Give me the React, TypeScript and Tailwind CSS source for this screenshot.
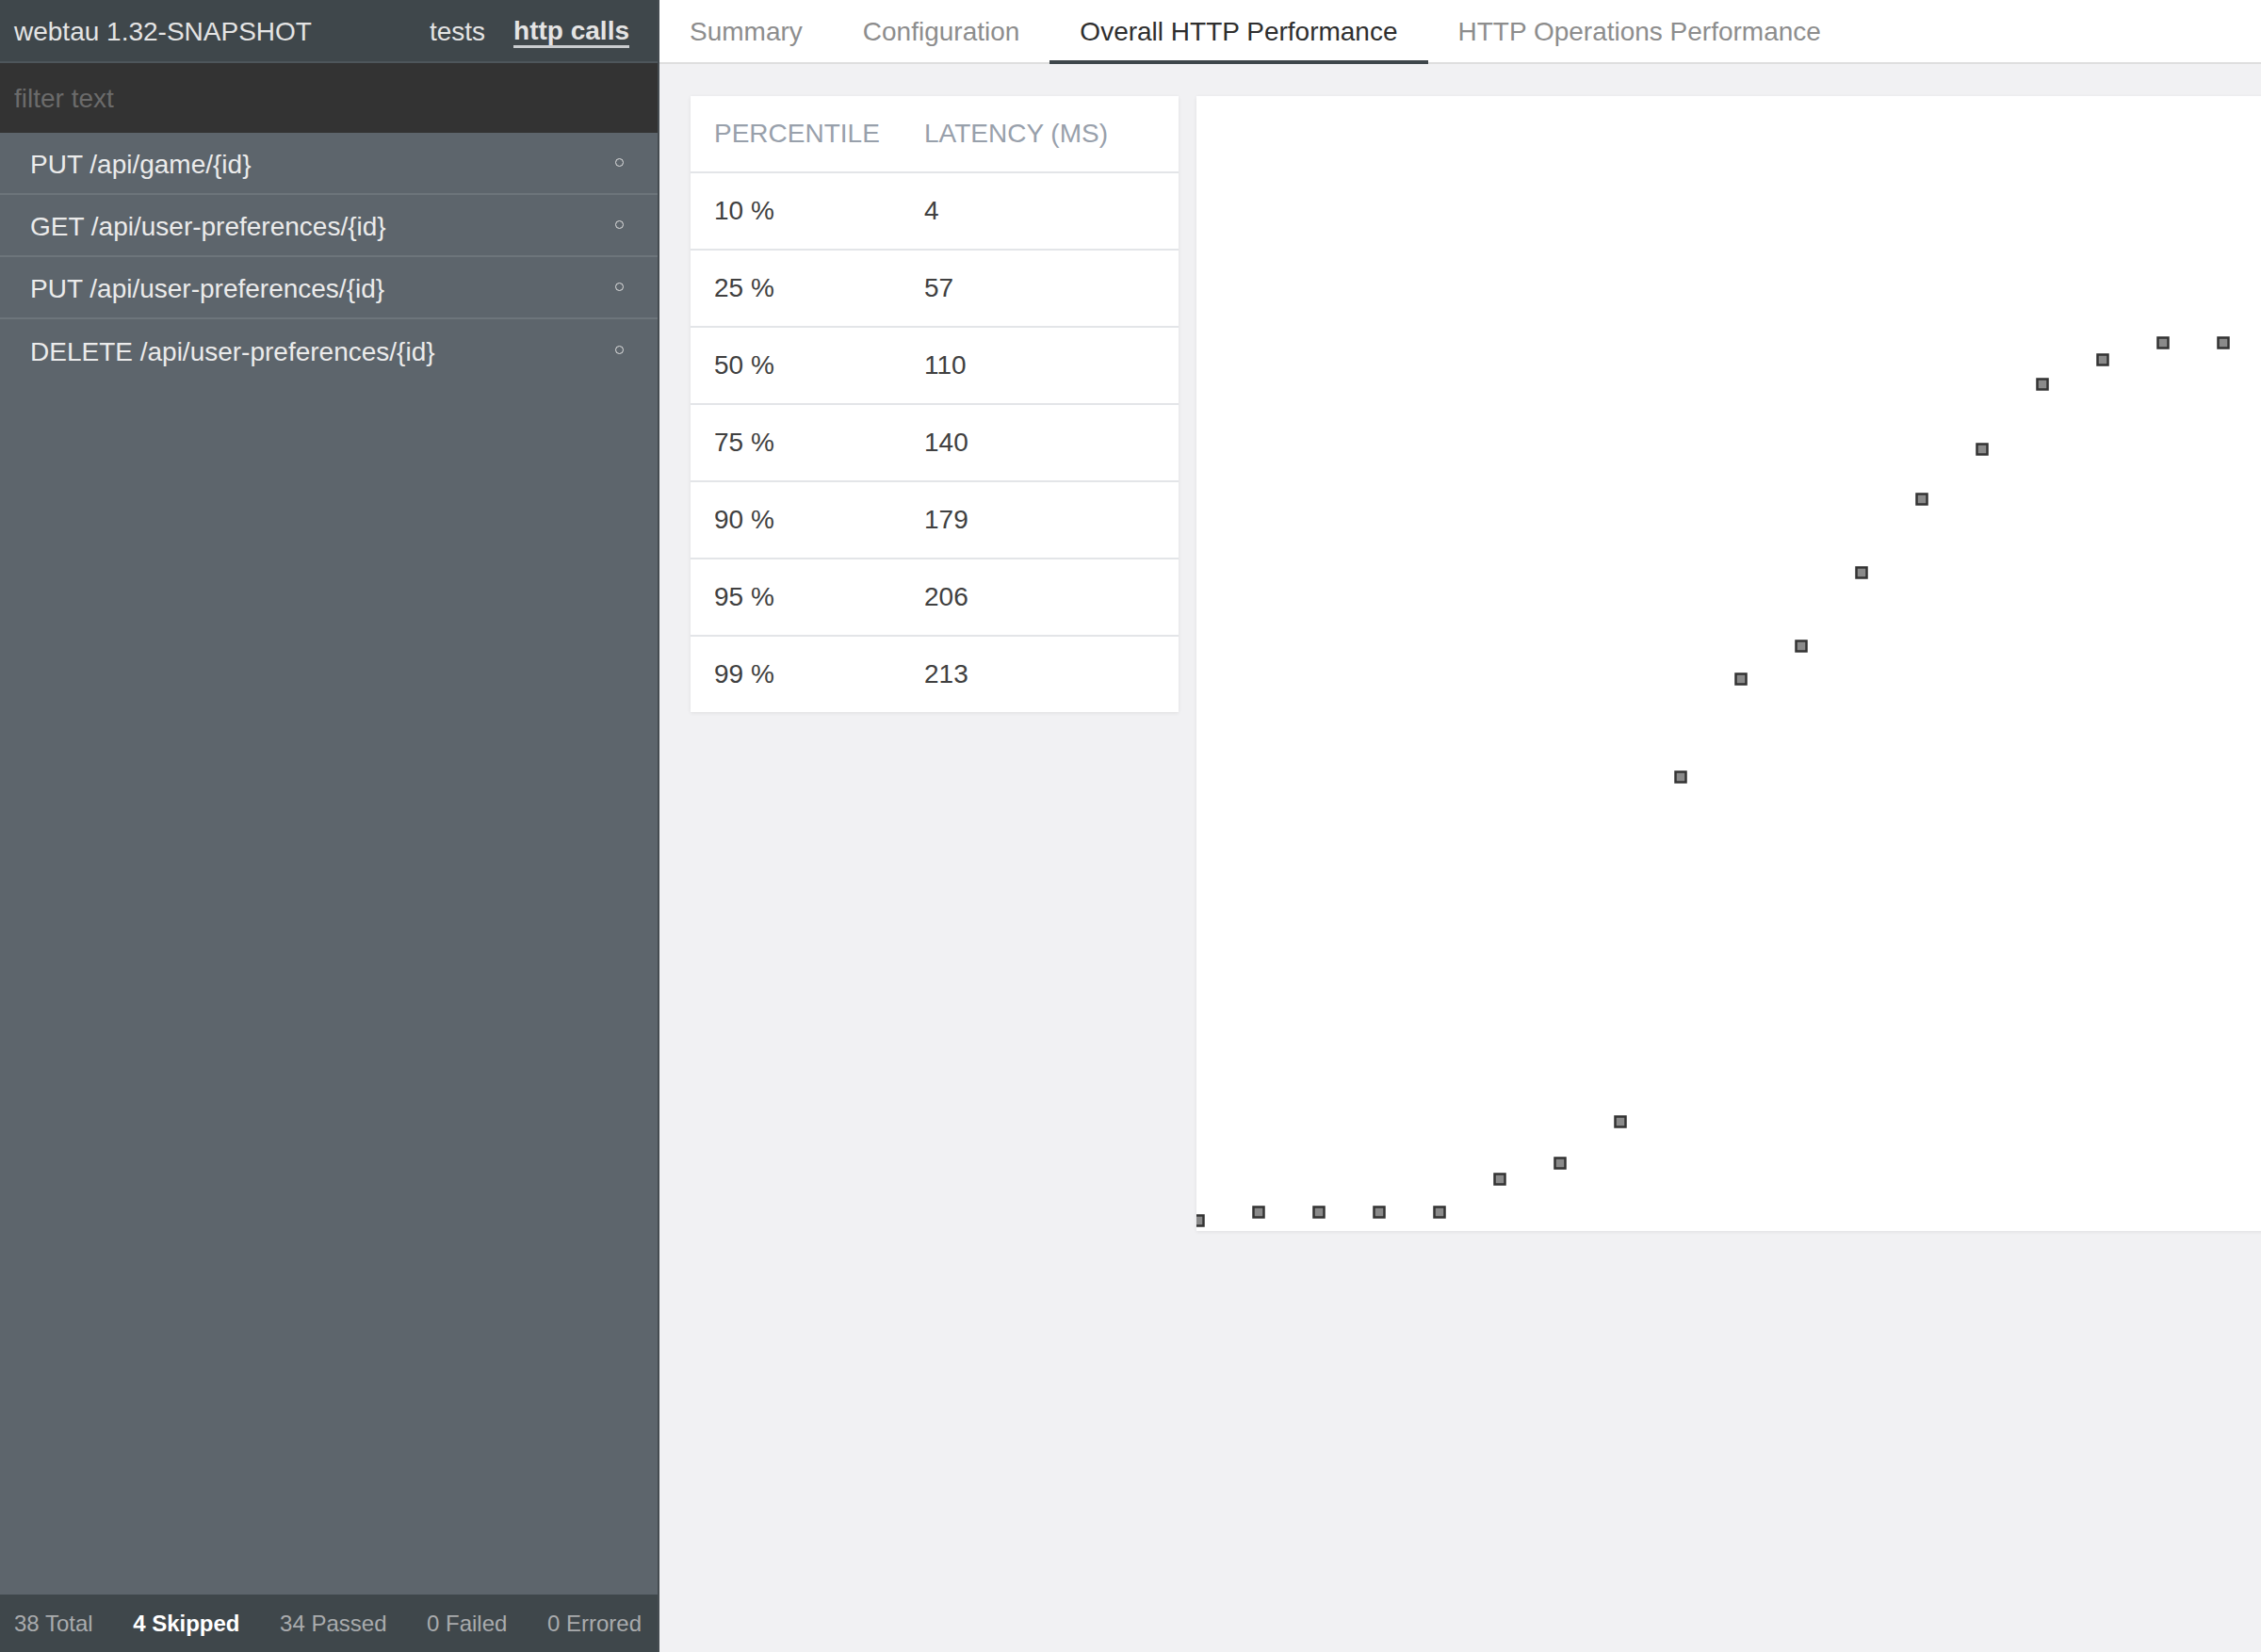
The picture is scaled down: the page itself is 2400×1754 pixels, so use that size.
import * as React from 'react';

const operations = [
  'PUT /api/game/{id}',
  'GET /api/user-preferences/{id}',
  'PUT /api/user-preferences/{id}',
  'DELETE /api/user-preferences/{id}',
];

const tabs = ['Summary', 'Configuration', 'Overall HTTP Performance', 'HTTP Operations Performance'];

const percentiles = [
  ['10 %', '4'],
  ['25 %', '57'],
  ['50 %', '110'],
  ['75 %', '140'],
  ['90 %', '179'],
  ['95 %', '206'],
  ['99 %', '213'],
];

// marker y positions inside the chart card, left to right
const points = [1194, 1185, 1185, 1185, 1185, 1150, 1133, 1089, 723, 619, 584, 506, 428, 375, 306, 280, 262, 262];

function Sidebar() {
  return (
    <div className="w-[700px] shrink-0 flex flex-col bg-[#5d656c] border-r-2 border-[#454c51]">
      {/* Header */}
      <div className="h-[67px] shrink-0 flex items-center justify-between pl-[15px] pr-[30px] pt-[3px] bg-[#3f474b] border-b-2 border-[#4e565b] text-[#e4e4e4] text-[28px]">
        <span>webtau 1.32-SNAPSHOT</span>
        <div className="flex items-center gap-[30px]">
          <span>tests</span>
          <span className="font-bold border-b-[3px] border-[#c9cccf] leading-[30px] pt-[1px]">http calls</span>
        </div>
      </div>

      {/* Filter */}
      <div className="h-[74px] shrink-0 bg-[#333333] flex items-center px-[15px] pt-[2px]">
        <input
          className="w-full bg-transparent outline-none text-[28px] text-[#ddd] placeholder:text-[#6b6b6b]"
          placeholder="filter text"
        />
      </div>

      {/* Operations */}
      <div className="flex-1 flex flex-col">
        {operations.map((op, i) => (
          <div
            key={op}
            className={
              'h-[66px] shrink-0 flex items-center justify-between pl-[32px] pr-[36px] pt-[3px] text-[28px] text-[#ebebeb] ' +
              (i < operations.length - 1 ? 'border-b-2 border-[#6d757b]' : '')
            }
          >
            <span>{op}</span>
            <span className="w-[9px] h-[9px] rounded-full border-[1.5px] border-[#e0e0e0] -mt-[4px]" />
          </div>
        ))}
      </div>

      {/* Footer stats */}
      <div className="h-[61px] shrink-0 bg-[#3f474b] flex items-center justify-between pl-[15px] pr-[17px] text-[24px] text-[#a9abad]">
        <span>38 Total</span>
        <span className="font-bold text-white">4 Skipped</span>
        <span>34 Passed</span>
        <span>0 Failed</span>
        <span>0 Errored</span>
      </div>
    </div>
  );
}

function PercentileTable() {
  return (
    <div className="w-[518px] shrink-0 bg-white shadow-[0_1px_4px_rgba(0,0,0,0.08)] text-[28px]">
      <div className="h-[82px] grid grid-cols-[223px_1fr] items-center pl-[25px] border-b-2 border-[#e3e5e8] text-[#98a0ab]">
        <span>PERCENTILE</span>
        <span>LATENCY (MS)</span>
      </div>
      {percentiles.map(([p, v], i) => (
        <div
          key={p}
          className={
            'grid grid-cols-[223px_1fr] items-center pl-[25px] text-[#404040] ' +
            (i < percentiles.length - 1 ? 'h-[82px] border-b-2 border-[#e3e5e8]' : 'h-[80px]')
          }
        >
          <span>{p}</span>
          <span>{v}</span>
        </div>
      ))}
    </div>
  );
}

function LatencyChart() {
  return (
    <div className="w-[1200px] h-[1205px] shrink-0 bg-white shadow-[0_1px_4px_rgba(0,0,0,0.08)] overflow-hidden">
      <svg width="1200" height="1205" viewBox="0 0 1200 1205">
        {points.map((y, i) => (
          <rect
            key={i}
            x={2 + 64 * i - 5.5}
            y={y - 5.5}
            width="11"
            height="11"
            fill="#8a8a8a"
            stroke="#333"
            strokeWidth="2.5"
          />
        ))}
      </svg>
    </div>
  );
}

export default function App() {
  return (
    <div
      className="w-[2400px] h-[1754px] flex overflow-hidden"
      style={{ fontFamily: '"Liberation Sans", Arial, sans-serif' }}
    >
      <Sidebar />
      <div className="flex-1 min-w-0 flex flex-col bg-[#f1f1f3] overflow-hidden">
        {/* Tabs */}
        <div className="h-[68px] shrink-0 flex bg-white border-b-2 border-[#dedede]">
          {tabs.map((t) => {
            const active = t === 'Overall HTTP Performance';
            return (
              <div
                key={t}
                className={
                  'h-[68px] px-[32px] pt-[3px] flex items-center text-[28px] border-b-4 ' +
                  (active ? 'border-[#3f474b] text-[#2e2e2e]' : 'border-transparent text-[#8d8d8d]')
                }
              >
                {t}
              </div>
            );
          })}
        </div>

        {/* Content */}
        <div className="flex items-start gap-[19px] pt-[34px] pl-[33px]">
          <PercentileTable />
          <LatencyChart />
        </div>
      </div>
    </div>
  );
}
